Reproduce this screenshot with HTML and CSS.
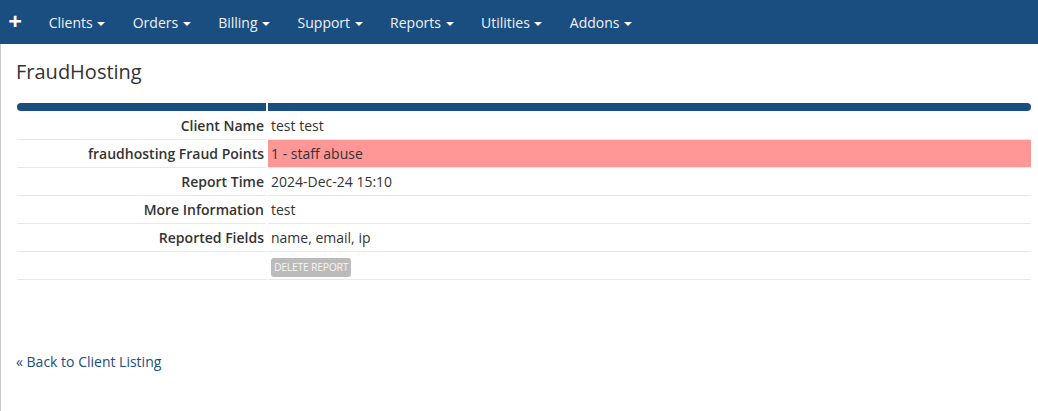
FILE: index.html
```html
<!DOCTYPE html>
<html>
<head>
<meta charset="utf-8">
<link rel="stylesheet" href="styles.css">
</head>
<body>
<nav class="navbar">
  <span class="nav-plus">+</span>
  <ul class="nav-menu">
    <li>Clients <span class="caret"></span></li>
    <li>Orders <span class="caret"></span></li>
    <li>Billing <span class="caret"></span></li>
    <li>Support <span class="caret"></span></li>
    <li>Reports <span class="caret"></span></li>
    <li>Utilities <span class="caret"></span></li>
    <li>Addons <span class="caret"></span></li>
  </ul>
</nav>
<main class="content">
  <h1 class="title">FraudHosting</h1>
  <table class="report">
    <thead>
      <tr><th class="hd-left"></th><th class="hd-right"></th></tr>
    </thead>
    <tbody>
      <tr><td class="label">Client Name</td><td class="value">test test</td></tr>
      <tr><td class="label">fraudhosting Fraud Points</td><td class="value danger">1 - staff abuse</td></tr>
      <tr><td class="label">Report Time</td><td class="value">2024-Dec-24 15:10</td></tr>
      <tr><td class="label">More Information</td><td class="value">test</td></tr>
      <tr><td class="label">Reported Fields</td><td class="value">name, email, ip</td></tr>
      <tr><td class="label"></td><td class="value"><span class="btn-delete">DELETE REPORT</span></td></tr>
    </tbody>
  </table>
  <a class="back-link" href="#">« Back to Client Listing</a>
</main>
</body>
</html>
```
FILE: styles.css
```css
html, body {
  margin: 0;
  padding: 0;
  background: #fff;
  font-family: "Open Sans", "Liberation Sans", sans-serif;
  font-size: 14px;
  color: #333;
}
.navbar {
  height: 44px;
  background: #1a4d80;
  display: flex;
  align-items: center;
  color: #fff;
}
.nav-plus {
  font-size: 24px;
  font-weight: bold;
  width: 30px;
  text-align: center;
  line-height: 1;
  margin-top: -3px;
}
.nav-menu {
  list-style: none;
  margin: 0;
  padding: 0 0 0 5px;
  display: flex;
}
.nav-menu li {
  padding: 0 13.7px;
  color: #f0f3f7;
  font-size: 14px;
  white-space: nowrap;
}
.caret {
  display: inline-block;
  width: 0;
  height: 0;
  margin-left: 1px;
  vertical-align: middle;
  border-top: 4px solid #fff;
  border-left: 4px solid transparent;
  border-right: 4px solid transparent;
}
.content {
  border-left: 1px solid #ccc;
  padding: 0 5px 48px 14px;
}
.title {
  margin: 0 0 0 1px;
  padding-top: 14px;
  font-size: 20px;
  font-weight: normal;
  line-height: 28px;
  color: #333;
}
.report {
  margin-top: 17px;
  width: 1018px;
  border-collapse: separate;
  border-spacing: 2px 0;
}
.report th {
  height: 8px;
  padding: 0;
  background: #1a4d80;
}
.hd-left {
  width: 249px;
  border-radius: 4px 0 0 4px;
}
.hd-right {
  border-radius: 0 4px 4px 0;
}
.report td {
  height: 27px;
  padding: 0 3px;
  border-bottom: 1px solid #e8e8e8;
  vertical-align: middle;
  line-height: 20px;
}
.report tbody tr:first-child td {
  height: 27px;
  padding-top: 1px;
}
.report td.label {
  text-align: right;
  font-weight: 600;
  color: #333;
  padding-right: 2px;
}
.value {
  color: #333;
}
.danger {
  background: #ff9797;
}
.btn-delete {
  display: inline-block;
  background: #bbb;
  color: #f4f4f4;
  font-size: 10.5px;
  letter-spacing: -0.3px;
  line-height: 19px;
  padding: 0 3px;
  border-radius: 3px;
  vertical-align: middle;
  position: relative;
  top: 1px;
}
.back-link {
  display: inline-block;
  margin-top: 72px;
  margin-left: 1px;
  color: #1a4d80;
  text-decoration: none;
}
```
